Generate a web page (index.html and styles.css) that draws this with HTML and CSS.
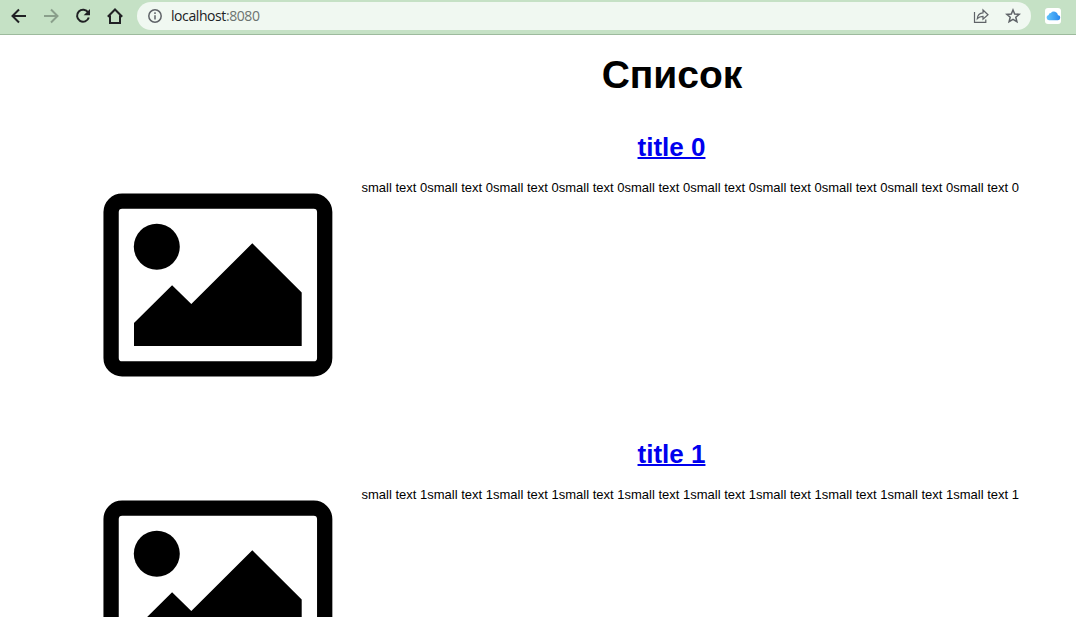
FILE: index.html
```
<!DOCTYPE html>
<html lang="ru">
<head>
<meta charset="utf-8">
<title>Список</title>
<link rel="stylesheet" href="styles.css">
</head>
<body>
<header class="toolbar">
  <nav class="nav">
    <svg class="icon" viewBox="0 0 16 16"><path d="M15 8H2M8 1.500L1.500 8 8 14.500"/></svg>
    <svg class="icon muted" viewBox="0 0 16 16"><path d="M1 8h13M8 1.500L14.500 8 8 14.500"/></svg>
    <svg class="icon" viewBox="0 0 16 16"><path d="M13.200 4.600A6 6 0 1 0 13.800 9.500"/><path class="solid" d="M15 1v6.300H8.700z"/></svg>
    <svg class="icon" viewBox="0 0 16 16"><path d="M.8 8.700L8 1.500l7.200 7.200M3 7.500V15h10V7.500"/></svg>
  </nav>
  <div class="address">
    <svg class="info" viewBox="0 0 14 14"><circle cx="7" cy="7" r="6.200"/><path d="M7 6.200v4.300M7 3.300v1.600"/></svg>
    <span class="url">localhost<span class="port">:8080</span></span>
    <svg class="share" viewBox="0 0 16 16"><path d="M1.500 4v10.400h11.300V11.500"/><path d="M4.300 10.700C4.600 7 6.700 5 10 4.900V2l5 4.700-5 4.500V8.300C7.500 8.300 5.700 9 4.300 10.700z"/></svg>
    <svg class="star" viewBox="0 0 16 16"><path d="M8 2l1.700 4 4.500.400-3.400 2.900 1.100 4.400L8 11.400l-3.900 2.300 1.100-4.400L1.800 6.400 6.300 6z"/></svg>
  </div>
  <span class="extension">
    <svg viewBox="0 0 16 16"><defs><linearGradient id="cloud"><stop stop-color="#62c4fb"/><stop offset="1" stop-color="#2788ee"/></linearGradient></defs><path fill="url(#cloud)" d="M4 12.200a2.700 2.700 0 0 1-.4-5.300 2.200 2.200 0 0 1 2.200-2A4.200 4.200 0 0 1 13 7.200a2.500 2.500 0 0 1-.6 5z"/></svg>
  </span>
</header>
<main class="list">
  <h1 class="heading">Список</h1>
  <article class="item">
    <h2 class="title"><a href="#0">title 0</a></h2>
    <div class="content">
      <svg class="picture" viewBox="0 0 230 184"><rect class="frame" x="8.100" y="8.100" width="213.600" height="167.800" rx="11"/><circle cx="53.800" cy="53.800" r="23"/><path d="M31 130l38.100-37.700 19.200 18.700 61-60.700 49.400 49.200V153H31z"/></svg>
      <p class="text">small text 0small text 0small text 0small text 0small text 0small text 0small text 0small text 0small text 0small text 0</p>
    </div>
  </article>
  <article class="item">
    <h2 class="title"><a href="#1">title 1</a></h2>
    <div class="content">
      <svg class="picture" viewBox="0 0 230 184"><rect class="frame" x="8.100" y="8.100" width="213.600" height="167.800" rx="11"/><circle cx="53.800" cy="53.800" r="23"/><path d="M31 130l38.100-37.700 19.200 18.700 61-60.700 49.400 49.200V153H31z"/></svg>
      <p class="text">small text 1small text 1small text 1small text 1small text 1small text 1small text 1small text 1small text 1small text 1</p>
    </div>
  </article>
</main>
</body>
</html>
```
FILE: styles.css
```
* { box-sizing: border-box; }
body {
  margin: 0;
  height: 617px;
  overflow: hidden;
  background: #fff;
  color: #000;
  font: 13px/15px "Liberation Sans", Arial, sans-serif;
}
svg { display: block; flex: none; }
.toolbar {
  display: flex;
  align-items: flex-start;
  height: 35px;
  padding-top: 2px;
  background: #c5e1c5;
  border-bottom: 1px solid #9dba9d;
}
.nav {
  display: flex;
  gap: 16px;
  padding: 6px 14px 0 11px;
}
.icon {
  width: 16px;
  height: 16px;
  fill: none;
  stroke: #202124;
  stroke-width: 2;
}
.muted { stroke: #8a9f8b; }
.solid { fill: #202124; stroke: none; }
.address {
  display: flex;
  align-items: center;
  width: 894px;
  height: 28px;
  padding: 0 10px 0 11px;
  border-radius: 14px;
  background: #f0f8f1;
}
.info, .share, .star { fill: none; stroke: #5f6368; stroke-width: 1.5; }
.info { width: 14px; height: 14px; }
.url {
  flex: 1;
  margin-left: 9px;
  font: 14px/20px "Open Sans", "Noto Sans", sans-serif;
  letter-spacing: -0.42px;
  color: #202124;
}
.port { color: #6c7370; }
.share { width: 16px; height: 16px; margin-right: 16px; stroke-width: 1.2; }
.star { width: 16px; height: 16px; }
.extension {
  width: 16px;
  height: 16px;
  margin: 6px 0 0 14px;
  border-radius: 3px;
  background: #fff;
}
.list {
  height: 582px;
  padding-left: 103px;
  overflow: hidden;
}
.heading {
  width: 730px;
  margin: 18px 0 0 204px;
  font-size: 39px;
  line-height: 44px;
  text-align: center;
}
.item { height: 307px; padding-top: 35px; }
.title {
  width: 729px;
  margin: 0 0 0 204px;
  font-size: 26px;
  line-height: 30px;
  text-align: center;
}
.title a {
  color: #00e;
  text-decoration-thickness: 2px;
  text-decoration-skip-ink: none;
}
.content { display: flex; padding-top: 18px; }
.picture { width: 230px; height: 184px; margin-top: 13px; }
.frame { fill: none; stroke: #000; stroke-width: 15.3; }
.text { margin: 0 0 0 28.5px; white-space: nowrap; }
```
